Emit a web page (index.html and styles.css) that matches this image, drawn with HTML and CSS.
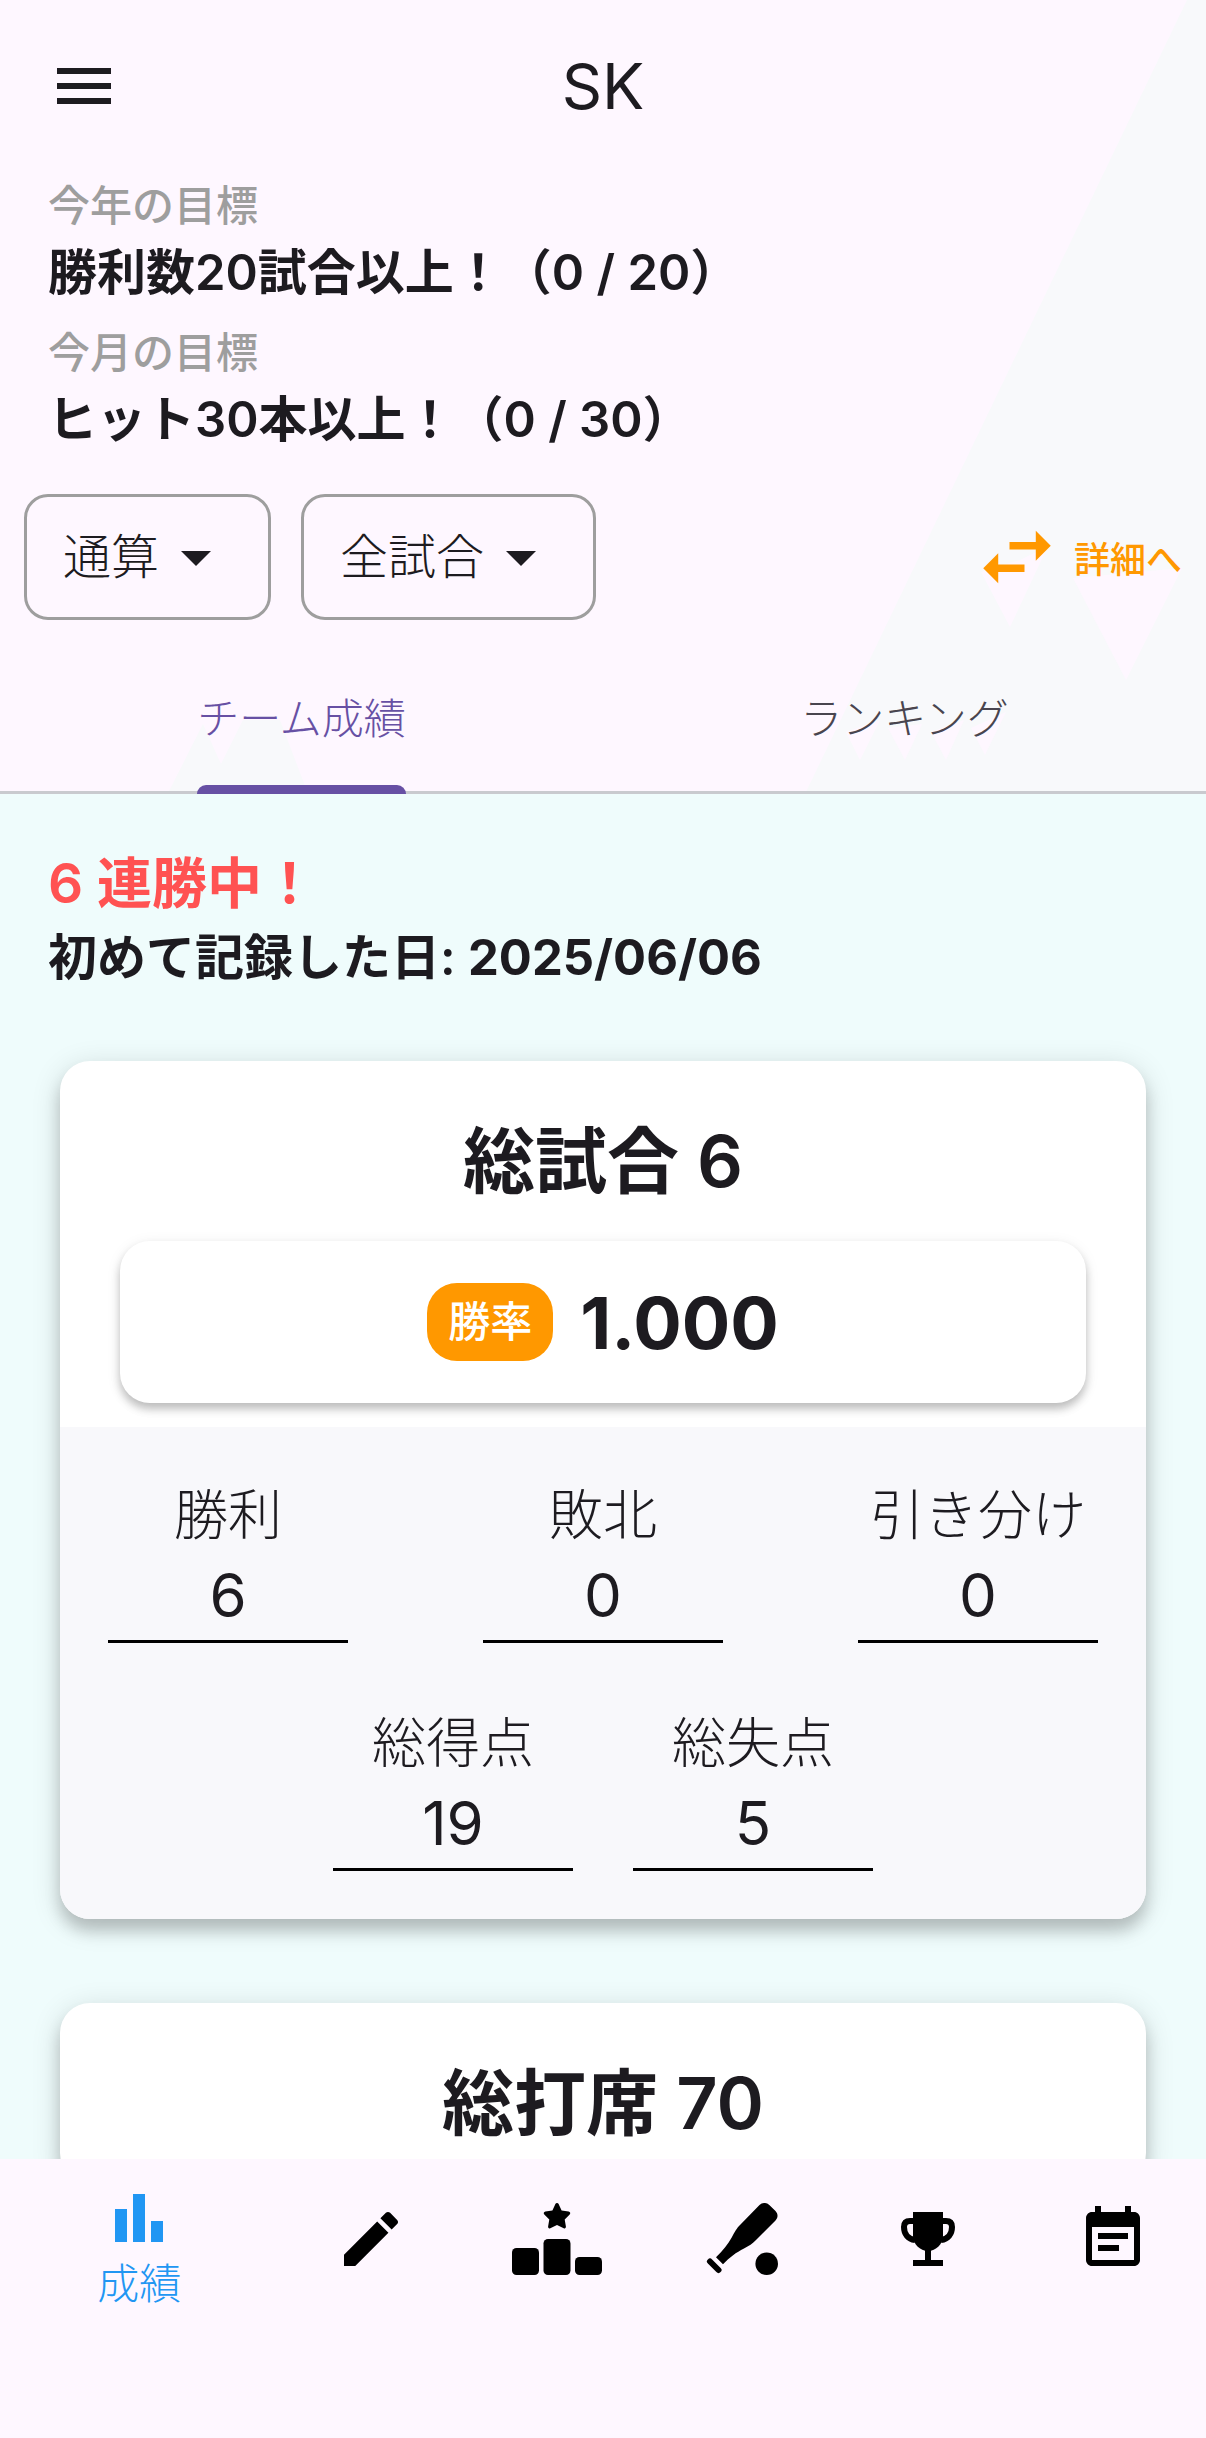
FILE: index.html
```html
<!DOCTYPE html>
<html lang="ja">
<head>
  <meta charset="UTF-8">
  <meta name="viewport" content="width=device-width, initial-scale=1.0">
  <title>SK</title>
  <link rel="stylesheet" href="styles.css">
</head>
<body>
  <header class="header">
    <svg class="header-bg" viewBox="0 0 1206 794" preserveAspectRatio="none" aria-hidden="true">
      <path class="shade" d="M1187 0H1206V794H805Z"/>
      <path class="shade" d="M169 791L203 724L221 764L243 720H280L307 791Z"/>
      <path class="light" d="M981 572L1010 627L1048 546L1020 560Z"/>
      <path class="light" d="M1073 578L1126 680L1182 568Z"/>
      <path class="light" d="M846 732L860 760L880 720ZM888 728L905 760L922 724ZM931 732L946 760L964 720ZM971 728L985 755L1006 712Z"/>
    </svg>

    <div class="app-bar">
      <button class="menu-button" type="button" aria-label="メニュー">
        <svg class="icon" viewBox="0 0 24 24"><path d="M3 18h18v-2H3v2zm0-5h18v-2H3v2zm0-7v2h18V6H3z"/></svg>
      </button>
      <h1>SK</h1>
    </div>

    <dl class="goals">
      <div class="goal">
        <dt>今年の目標</dt>
        <dd>勝利数20試合以上！（0 / 20）</dd>
      </div>
      <div class="goal">
        <dt>今月の目標</dt>
        <dd>ヒット30本以上！（0 / 30）</dd>
      </div>
    </dl>

    <div class="filters">
      <div class="dropdown">
        <select aria-label="期間">
          <option>通算</option>
        </select>
        <svg class="icon" viewBox="0 0 24 24"><path d="M7 10l5 5 5-5z"/></svg>
      </div>
      <div class="dropdown">
        <select aria-label="試合">
          <option>全試合</option>
        </select>
        <svg class="icon" viewBox="0 0 24 24"><path d="M7 10l5 5 5-5z"/></svg>
      </div>
      <a class="detail-link" href="#detail">
        <svg viewBox="0 0 24 24"><path d="M6.99 11L3 15l3.99 4v-3H14v-2H6.99v-3zM21 9l-3.99-4v3H10v2h7.01v3L21 9z"/></svg>
        詳細へ
      </a>
    </div>

    <div class="tabs" role="tablist">
      <button class="tab active" type="button" role="tab" aria-selected="true"><span>チーム成績</span></button>
      <button class="tab" type="button" role="tab" aria-selected="false"><span>ランキング</span></button>
    </div>
  </header>

  <main class="content">
    <div class="summary">
      <p class="streak">6 連勝中！</p>
      <p class="first-date">初めて記録した日: <time>2025/06/06</time></p>
    </div>

    <section class="card">
      <h2>総試合 6</h2>
      <div class="rate">
        <span class="badge">勝率</span>
        <strong>1.000</strong>
      </div>
      <div class="stats">
        <dl class="stat-row">
          <div class="stat"><dt>勝利</dt><dd>6</dd></div>
          <div class="stat"><dt>敗北</dt><dd>0</dd></div>
          <div class="stat"><dt>引き分け</dt><dd>0</dd></div>
        </dl>
        <dl class="stat-row centered">
          <div class="stat"><dt>総得点</dt><dd>19</dd></div>
          <div class="stat"><dt>総失点</dt><dd>5</dd></div>
        </dl>
      </div>
    </section>

    <section class="card">
      <h2>総打席 70</h2>
    </section>
  </main>

  <nav class="bottom-nav">
    <a class="nav-item active" href="#stats">
      <svg class="icon" viewBox="0 0 24 24"><path d="M4 9h4v11H4zM10 4h4v16h-4zM16 13h4v7h-4z"/></svg>
      <span>成績</span>
    </a>
    <a class="nav-item" href="#edit" aria-label="記録">
      <svg class="icon" viewBox="0 0 24 24"><path d="M3 17.25V21h3.75L17.81 9.94l-3.75-3.75L3 17.25zM20.71 7.04c.39-.39.39-1.02 0-1.41l-2.34-2.34c-.39-.39-1.02-.39-1.41 0l-1.83 1.83 3.75 3.75 1.83-1.83z"/></svg>
    </a>
    <a class="nav-item" href="#ranking" aria-label="ランキング">
      <svg class="icon wide" viewBox="0 0 90 72">
        <path d="M45 0c.8 0 1.3.4 1.6 1.1l3 6.4 7 1c1.7.3 2.2 1.8 1.1 2.9l-5 5 1.2 7.2c.2 1.5-1 2.2-2.2 1.6L45 22l-6.700 3.200c-1.200.6-2.400-.1-2.200-1.600l1.200-7.200-5-5c-1.100-1.100-.6-2.600 1.100-2.900l7-1 3-6.400C43.700.4 44.200 0 45 0z"/>
        <rect x="0" y="45" width="27" height="27" rx="4.5"/>
        <rect x="31.5" y="36" width="27" height="36" rx="4.5"/>
        <rect x="63" y="54" width="27" height="18" rx="4.5"/>
      </svg>
    </a>
    <a class="nav-item" href="#games" aria-label="試合">
      <svg class="icon" viewBox="0 0 72 72">
        <path d="M53.5 2C56.5-.7 60.500-.7 63.300 2L69.500 8C72.200 11 72.200 14.500 69.500 17.500L50 37C46.500 40.500 43 43 38 45.500C30 49.500 24 54 17 61.300L10 54.300C17 47.500 22 41 26 34C29 28.500 30.500 25.500 34 22Z"/>
        <path class="knob" d="M4 58.500L12.500 67"/>
        <circle cx="60.700" cy="60.700" r="11.300"/>
      </svg>
    </a>
    <a class="nav-item" href="#awards" aria-label="表彰">
      <svg class="icon" viewBox="0 0 72 72">
        <path d="M21 9h30v24c0 8-7 15-15 15s-15-7-15-15z"/>
        <path d="M33 46h6v11h12v6H21v-6h12z"/>
        <path class="handle" d="M22 18h-4c-4 0-6 2-6 6 0 7 4 12 11 13M50 18h4c4 0 6 2 6 6 0 7-4 12-11 13"/>
      </svg>
    </a>
    <a class="nav-item" href="#schedule" aria-label="予定">
      <svg class="icon" viewBox="0 0 24 24"><path d="M17 10H7v2h10v-2zm2-7h-1V1h-2v2H8V1H6v2H5c-1.11 0-1.99.9-1.99 2L3 19c0 1.1.89 2 2 2h14c1.1 0 2-.9 2-2V5c0-1.1-.9-2-2-2zm0 16H5V8h14v11zm-5-5H7v2h7v-2z"/></svg>
    </a>
  </nav>
</body>
</html>
```

FILE: styles.css
```css
* {
  box-sizing: border-box;
}
body {
  margin: 0;
  height: 100vh;
  display: flex;
  flex-direction: column;
  font-family: Inter, "Noto Sans CJK JP", sans-serif;
  font-size: 48px;
  font-weight: 300;
  background: #fef7ff;
  color: #1d1b20;
}
h1, h2, p, dl, dd {
  margin: 0;
}
button, select {
  font: inherit;
  color: inherit;
  background: none;
  border: none;
  padding: 0;
  margin: 0;
}
a {
  text-decoration: none;
}
svg {
  display: block;
  fill: currentColor;
  flex: none;
}
.icon {
  width: 72px;
  height: 72px;
}

/* header */
.header {
  position: relative;
  z-index: 0;
  flex: none;
}
.header-bg {
  position: absolute;
  inset: 0;
  width: 100%;
  height: 100%;
  z-index: -1;
}
.shade { fill: #f8f9fb; }
.light { fill: #fef7ff; }
.app-bar {
  display: grid;
  grid-template-columns: 1fr auto 1fr;
  align-items: center;
  height: 172px;
  padding: 0 48px;
}
.menu-button {
  justify-self: start;
}
h1 {
  font-size: 63px;
  font-weight: 400;
}
.goals {
  padding: 4px 48px 0;
}
.goal {
  padding-bottom: 15px;
}
.goal dt {
  font-size: 42px;
  line-height: 60px;
  font-weight: 500;
  color: #9e9e9e;
}
.goal dd {
  font-size: 49px;
  line-height: 74px;
  margin-bottom: -2px;
  font-weight: 600;
}
.filters {
  display: flex;
  align-items: center;
  gap: 30px;
  padding: 24px 24px 30px;
}
.dropdown {
  display: flex;
  align-items: center;
  height: 126px;
  padding: 0 36px;
  border: 3px solid #9e9e9e;
  border-radius: 24px;
}
.dropdown select {
  appearance: none;
  line-height: 72px;
}
.detail-link {
  display: flex;
  align-items: center;
  gap: 12px;
  margin-left: auto;
  font-size: 36px;
  font-weight: 500;
  color: #ff9800;
}
.detail-link svg {
  width: 90px;
  height: 90px;
}
.tabs {
  display: flex;
  height: 144px;
  border-bottom: 3px solid #c9cacf;
}
.tab {
  flex: 1;
  display: flex;
  justify-content: center;
  height: 144px;
  font-size: 42px;
  color: #49454f;
}
.tab span {
  position: relative;
  height: 144px;
  line-height: 137px;
}
.tab.active {
  color: #6750a4;
}
.tab.active span::after {
  content: "";
  position: absolute;
  left: 0;
  right: 0;
  bottom: 0;
  height: 9px;
  background: #6750a4;
  border-radius: 9px 9px 0 0;
}

/* scrolling content */
.content {
  flex: 1;
  min-height: 0;
  overflow-y: auto;
  scrollbar-width: none;
  padding: 50px 60px 0;
  background: #effcfc;
}
.summary {
  margin: 0 -12px;
  font-weight: 600;
}
.streak {
  font-size: 55px;
  line-height: 78px;
  color: #ff5252;
}
.first-date {
  font-size: 49px;
  line-height: 72px;
}
.first-date time {
  font-weight: 700;
}
.card {
  margin: 67px 0 84px;
  overflow: hidden;
  background: #fff;
  border-radius: 30px;
  box-shadow: 0 12px 15px rgba(0, 0, 0, 0.18), 0 6px 30px rgba(0, 0, 0, 0.14);
}
.card h2 {
  padding: 49px 0 29px;
  font-size: 72px;
  line-height: 102px;
  font-weight: 600;
  text-align: center;
}
.rate {
  display: flex;
  align-items: center;
  justify-content: center;
  gap: 27px;
  height: 162px;
  margin: 0 60px 24px;
  border-radius: 30px;
  box-shadow: 0 6px 9px rgba(0, 0, 0, 0.22), 0 3px 15px rgba(0, 0, 0, 0.08);
}
.rate strong {
  font-size: 72px;
  font-weight: 700;
}
.badge {
  padding: 0 21px;
  font-size: 42px;
  line-height: 78px;
  font-weight: 500;
  color: #fff;
  background: #ff9800;
  border-radius: 30px;
}
.stats {
  display: grid;
  gap: 60px;
  padding: 48px;
  background: #f8f8fb;
}
.stat-row {
  display: flex;
  justify-content: space-between;
}
.stat-row.centered {
  justify-content: center;
  gap: 60px;
}
.stat {
  width: 240px;
  text-align: center;
  border-bottom: 3px solid #000;
}
.stat dt {
  font-size: 54px;
  line-height: 81px;
}
.stat dd {
  padding-bottom: 6px;
  font-size: 60px;
  line-height: 78px;
  font-weight: 400;
}

/* bottom navigation */
.bottom-nav {
  flex: none;
  display: flex;
  height: 279px;
  padding-top: 23px;
}
.nav-item {
  flex: 2;
  display: flex;
  flex-direction: column;
  align-items: center;
  padding-top: 21px;
  color: #000;
}
.nav-item.active {
  flex: 3;
  padding-top: 0;
  color: #2196f3;
}
.nav-item span {
  font-size: 42px;
  line-height: 60px;
}
.wide {
  width: 90px;
}
.knob,
.handle {
  fill: none;
  stroke: currentColor;
  stroke-width: 6;
}
.knob {
  stroke-linecap: round;
}
```
